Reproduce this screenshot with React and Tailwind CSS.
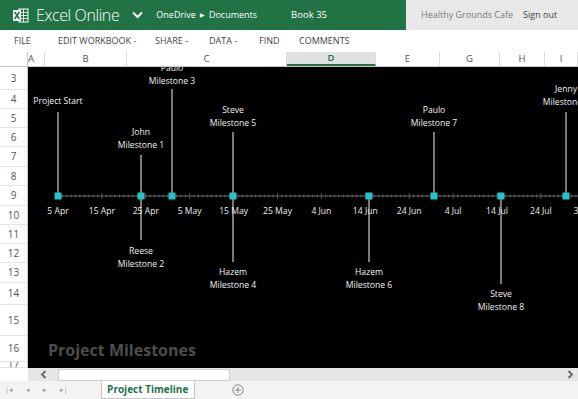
import React from 'react'

const ui = { fontFamily: '"Open Sans", "Noto Sans", sans-serif' }

const cols = [
  { name: 'A', w: 'w-[17px]' },
  { name: 'B', w: 'w-[82px]' },
  { name: 'C', w: 'w-[160px]' },
  { name: 'D', w: 'w-[89px]', active: true },
  { name: 'E', w: 'w-[64px]' },
  { name: 'G', w: 'w-[60px]' },
  { name: 'H', w: 'w-[45px]' },
  { name: 'I', w: 'flex-1' },
]

const rows = [
  ['3', 'h-[23px]'],
  ['4', 'h-[19px]'],
  ['5', 'h-[19px]'],
  ['6', 'h-[19px]'],
  ['7', 'h-[20px]'],
  ['8', 'h-[19px]'],
  ['9', 'h-[20px]'],
  ['10', 'h-[19px]'],
  ['11', 'h-[19px]'],
  ['12', 'h-[19px]'],
  ['13', 'h-[20px]'],
  ['14', 'h-[22px]'],
  ['15', 'h-[31px]'],
  ['16', 'h-[26px]'],
  ['17', 'h-[6px]'],
]

const AXIS = 196

// x, label lines, y of first line center, line from/to
const milestones = [
  { x: 58, text: ['Project Start'], y: 101, from: 112, to: AXIS },
  { x: 172, text: ['Paulo', 'Milestone 3'], y: 68, from: 89, to: AXIS },
  { x: 141, text: ['John', 'Milestone 1'], y: 132, from: 155, to: AXIS },
  { x: 233, text: ['Steve', 'Milestone 5'], y: 110, from: 132, to: AXIS },
  { x: 434, text: ['Paulo', 'Milestone 7'], y: 110, from: 132, to: AXIS },
  { x: 566, text: ['Jenny', 'Milestone 9'], y: 89, from: 112, to: AXIS },
  { x: 141, text: ['Reese', 'Milestone 2'], y: 251, from: AXIS, to: 240 },
  { x: 233, text: ['Hazem', 'Milestone 4'], y: 272, from: AXIS, to: 262 },
  { x: 369, text: ['Hazem', 'Milestone 6'], y: 272, from: AXIS, to: 262 },
  { x: 501, text: ['Steve', 'Milestone 8'], y: 294, from: AXIS, to: 284 },
]

const markers = [58, 141, 172, 233, 369, 434, 501, 566]

const dates = ['5 Apr', '15 Apr', '25 Apr', '5 May', '15 May', '25 May', '4 Jun', '14 Jun', '24 Jun', '4 Jul', '14 Jul', '24 Jul', '3 Aug']
const STEP = 43.9

function Chart() {
  const ticks = []
  for (let i = 0; i < 125; i++) {
    const x = 58 + (i * STEP) / 10
    const major = i % 10 === 0
    ticks.push(
      <line key={i} x1={x} x2={x} y1={AXIS - (major ? 3 : 1.5)} y2={AXIS + (major ? 3 : 1.5)} stroke="#6b6b6b" strokeWidth="0.8" />
    )
  }
  return (
    <svg viewBox="28 67 550 301" className="h-full w-full" style={{ fontFamily: '"Open Sans", "Noto Sans", sans-serif' }}>
      <rect x="28" y="67" width="550" height="301" fill="#000" />
      <line x1="55" x2="578" y1={AXIS} y2={AXIS} stroke="#6b6b6b" strokeWidth="1" />
      {ticks}
      {milestones.map((m, i) => (
        <g key={i}>
          <line x1={m.x} x2={m.x} y1={m.from} y2={m.to} stroke="#9a9a9a" strokeWidth="1.6" />
          {m.text.map((t, j) => (
            <text key={j} x={m.x} y={m.y + j * 12.5 + 3} textAnchor="middle" fontSize="8.6" fill="#f2f2f2">
              {t}
            </text>
          ))}
        </g>
      ))}
      {markers.map((x) => (
        <rect key={x} x={x - 3.5} y={AXIS - 3.5} width="7" height="7" fill="#27c2c9" />
      ))}
      {dates.map((d, i) => (
        <text key={d} x={58 + i * STEP} y={213.5} textAnchor="middle" fontSize="8.6" fill="#ededed">
          {d}
        </text>
      ))}
      <text x="48" y="356" fontSize="16" fontWeight="700" fill="#4d4d4d">
        Project Milestones
      </text>
    </svg>
  )
}

function ExcelLogo() {
  return (
    <svg width="16" height="15" viewBox="0 0 16 15">
      <rect x="6" y="1" width="9" height="13" fill="none" stroke="#fff" strokeWidth="1" />
      <line x1="6" x2="15" y1="4.5" y2="4.5" stroke="#fff" strokeWidth="0.8" />
      <line x1="6" x2="15" y1="7.5" y2="7.5" stroke="#fff" strokeWidth="0.8" />
      <line x1="6" x2="15" y1="10.5" y2="10.5" stroke="#fff" strokeWidth="0.8" />
      <line x1="10.5" x2="10.5" y1="1" y2="14" stroke="#fff" strokeWidth="0.8" />
      <rect x="0" y="2" width="8" height="11" fill="#fff" />
      <path d="M1.6 4 L6.4 11 M6.4 4 L1.6 11" stroke="#217346" strokeWidth="1.6" />
    </svg>
  )
}

export default function App() {
  return (
    <div className="flex h-[399px] w-[578px] flex-col overflow-hidden bg-white" style={ui}>
      {/* top bar */}
      <div className="flex h-[30px] shrink-0 whitespace-nowrap">
        <div className="flex w-[406px] items-center bg-[#217346] text-white">
          <div className="ml-[13px]">
            <ExcelLogo />
          </div>
          <span className="ml-[7px] text-[16px] font-light leading-none tracking-[-0.4px]">Excel Online</span>
          <svg className="ml-[13px]" width="11" height="8" viewBox="0 0 11 8">
            <path d="M1 1.5 L5.5 6 L10 1.5" fill="none" stroke="#fff" strokeWidth="2" />
          </svg>
          <span className="ml-[13px] text-[9px]">OneDrive</span>
          <span className="mx-[4px] text-[6px]">▶</span>
          <span className="text-[9px]">Documents</span>
          <span className="ml-[34px] text-[9.5px]">Book 35</span>
        </div>
        <div className="flex flex-1 items-center bg-[#e8e8e8] text-[9px]">
          <span className="ml-[15px] text-[#7a7a7a]">Healthy Grounds Cafe</span>
          <span className="ml-[10px] text-[#444]">Sign out</span>
        </div>
      </div>

      {/* ribbon tabs */}
      <div className="flex h-[22px] shrink-0 items-center whitespace-nowrap text-[9px] text-[#444]">
        <span className="ml-[14px] w-[44px]">FILE</span>
        <span className="w-[97px]">EDIT WORKBOOK -</span>
        <span className="w-[54px]">SHARE -</span>
        <span className="w-[50px]">DATA -</span>
        <span className="w-[40px]">FIND</span>
        <span>COMMENTS</span>
      </div>

      {/* column headers */}
      <div className="flex h-[15px] shrink-0 border-b border-[#c8c8c8] text-[9.5px] text-[#555]">
        <div className="w-[28px] shrink-0 border-r border-[#c8c8c8]" />
        {cols.map((c) => (
          <div
            key={c.name}
            className={`${c.w} flex shrink-0 items-center justify-center overflow-hidden border-r border-[#dcdcdc] ${
              c.active ? 'border-b-2 border-b-[#217346] bg-[#e1e1e1] font-semibold text-[#217346]' : ''
            }`}
          >
            <span className={c.name === 'A' ? '-ml-[10px]' : ''}>{c.name}</span>
          </div>
        ))}
      </div>

      {/* body */}
      <div className="flex h-[301px] shrink-0">
        <div className="flex w-[28px] shrink-0 flex-col border-r border-[#c8c8c8] text-[10px] text-[#555]">
          {rows.map(([n, h]) => (
            <div key={n} className={`${h} flex shrink-0 items-center justify-center overflow-hidden border-b border-[#e2e2e2]`}>
              {n}
            </div>
          ))}
        </div>
        <div className="flex-1 bg-black">
          <Chart />
        </div>
      </div>

      {/* horizontal scroll */}
      <div className="flex h-[13px] shrink-0">
        <div className="w-[28px] bg-white" />
        <div className="flex flex-1 items-center bg-[#e6e6e6]">
          <span className="flex w-[30px] items-center justify-center">
            <svg width="7" height="9" viewBox="0 0 7 9">
              <path d="M5.5 1 L2 4.5 L5.5 8" fill="none" stroke="#666" strokeWidth="1.8" />
            </svg>
          </span>
          <div className="h-[12px] w-[172px] border border-[#cfcfcf] bg-white" />
          <div className="flex-1" />
          <span className="mr-[4px]">
            <svg width="7" height="9" viewBox="0 0 7 9">
              <path d="M1.5 1 L5 4.5 L1.5 8" fill="none" stroke="#666" strokeWidth="1.8" />
            </svg>
          </span>
        </div>
      </div>

      {/* sheet tabs */}
      <div className="flex flex-1 items-stretch bg-[#f3f3f3] text-[#9a9a9a]">
        <div className="flex items-center gap-[13px] pl-[5px] text-[7px]">
          <span>|◂</span>
          <span>◂</span>
          <span>▸</span>
          <span>▸|</span>
        </div>
        <div className="ml-[33px] flex w-[94px] items-center justify-center border-x border-b border-[#c6c6c6] bg-white text-[10px] font-bold text-[#217346]">
          Project Timeline
        </div>
        <div className="ml-[37px] flex items-center">
          <svg width="12" height="12" viewBox="0 0 12 12">
            <circle cx="6" cy="6" r="5.2" fill="none" stroke="#8a8a8a" strokeWidth="1" />
            <path d="M6 3 V9 M3 6 H9" stroke="#8a8a8a" strokeWidth="1" />
          </svg>
        </div>
      </div>
    </div>
  )
}
